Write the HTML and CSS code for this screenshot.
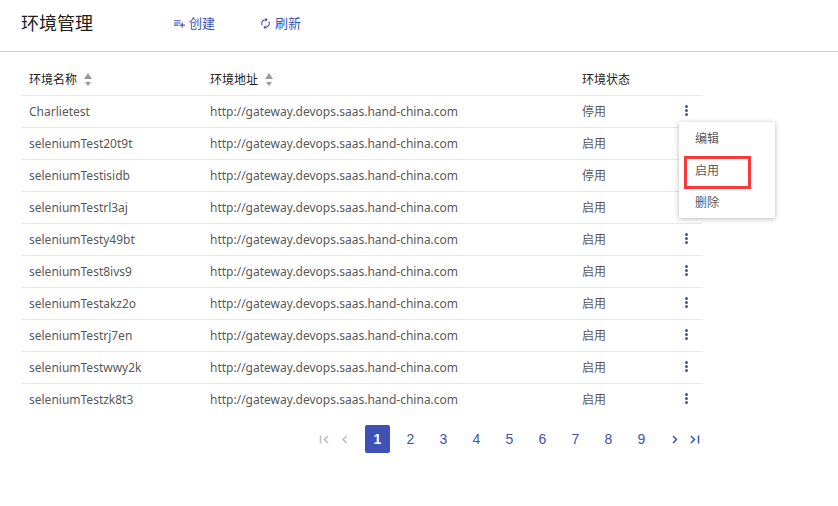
FILE: index.html
```html
<!DOCTYPE html>
<html lang="zh-CN">
<head>
<meta charset="utf-8">
<title>环境管理</title>
<link rel="stylesheet" href="styles.css">
</head>
<body>
<svg class="sprite" aria-hidden="true">
  <symbol id="more" viewBox="0 0 3 11"><circle cx="1.5" cy="1.500" r="1.500"/><circle cx="1.5" cy="5.500" r="1.500"/><circle cx="1.5" cy="9.500" r="1.500"/></symbol>
  <symbol id="sort" viewBox="0 0 8 13"><path d="M4 0l4 6H0z"/><path d="M4 13l3-4H1z"/></symbol>
</svg>
<header class="page-header">
  <h1 class="page-title">环境管理</h1>
  <button class="action" type="button">
    <svg class="action-icon" viewBox="0 0 24 24"><path d="M14 10H2v2h12v-2zm0-4H2v2h12V6zm4 8v-4h-2v4h-4v2h4v4h2v-4h4v-2h-4zM2 16h8v-2H2v2z"/></svg>
    创建
  </button>
  <button class="action" type="button">
    <svg class="action-icon" viewBox="0 0 24 24"><path d="M12 6v3l4-4-4-4v3c-4.400 0-8 3.600-8 8 0 1.600.5 3 1.200 4.300L6.700 14.800C6.300 14 6 13 6 12c0-3.300 2.700-6 6-6zm6.800 1.700L17.300 9.200c.4.900.7 1.800.7 2.800 0 3.300-2.700 6-6 6v-3l-4 4 4 4v-3c4.400 0 8-3.600 8-8 0-1.600-.5-3-1.200-4.300z"/></svg>
    刷新
  </button>
</header>
<main class="content">
  <table class="env-table">
    <colgroup><col class="col-name"><col class="col-url"><col class="col-status"><col class="col-actions"></colgroup>
    <thead>
      <tr>
        <th scope="col"><span class="sortable">环境名称<svg class="sort-icon"><use href="#sort"/></svg></span></th>
        <th scope="col"><span class="sortable">环境地址<svg class="sort-icon"><use href="#sort"/></svg></span></th>
        <th scope="col">环境状态</th>
        <td></td>
      </tr>
    </thead>
    <tbody>
      <tr><td>Charlietest</td><td>http://gateway.devops.saas.hand-china.com</td><td>停用</td>
        <td class="actions">
          <button class="more" type="button" aria-label="更多"><svg class="more-icon"><use href="#more"/></svg></button>
          <div class="menu">
            <button class="menu-item" type="button">编辑</button>
            <button class="menu-item marked" type="button">启用</button>
            <button class="menu-item" type="button">删除</button>
          </div>
        </td></tr>
      <tr><td>seleniumTest20t9t</td><td>http://gateway.devops.saas.hand-china.com</td><td>启用</td><td class="actions"><button class="more" type="button" aria-label="更多"><svg class="more-icon"><use href="#more"/></svg></button></td></tr>
      <tr><td>seleniumTestisidb</td><td>http://gateway.devops.saas.hand-china.com</td><td>停用</td><td class="actions"><button class="more" type="button" aria-label="更多"><svg class="more-icon"><use href="#more"/></svg></button></td></tr>
      <tr><td>seleniumTestrl3aj</td><td>http://gateway.devops.saas.hand-china.com</td><td>启用</td><td class="actions"><button class="more" type="button" aria-label="更多"><svg class="more-icon"><use href="#more"/></svg></button></td></tr>
      <tr><td>seleniumTesty49bt</td><td>http://gateway.devops.saas.hand-china.com</td><td>启用</td><td class="actions"><button class="more" type="button" aria-label="更多"><svg class="more-icon"><use href="#more"/></svg></button></td></tr>
      <tr><td>seleniumTest8ivs9</td><td>http://gateway.devops.saas.hand-china.com</td><td>启用</td><td class="actions"><button class="more" type="button" aria-label="更多"><svg class="more-icon"><use href="#more"/></svg></button></td></tr>
      <tr><td>seleniumTestakz2o</td><td>http://gateway.devops.saas.hand-china.com</td><td>启用</td><td class="actions"><button class="more" type="button" aria-label="更多"><svg class="more-icon"><use href="#more"/></svg></button></td></tr>
      <tr><td>seleniumTestrj7en</td><td>http://gateway.devops.saas.hand-china.com</td><td>启用</td><td class="actions"><button class="more" type="button" aria-label="更多"><svg class="more-icon"><use href="#more"/></svg></button></td></tr>
      <tr><td>seleniumTestwwy2k</td><td>http://gateway.devops.saas.hand-china.com</td><td>启用</td><td class="actions"><button class="more" type="button" aria-label="更多"><svg class="more-icon"><use href="#more"/></svg></button></td></tr>
      <tr><td>seleniumTestzk8t3</td><td>http://gateway.devops.saas.hand-china.com</td><td>启用</td><td class="actions"><button class="more" type="button" aria-label="更多"><svg class="more-icon"><use href="#more"/></svg></button></td></tr>
    </tbody>
  </table>
  <nav class="pagination" aria-label="分页">
    <button class="arrow" type="button" disabled aria-label="首页"><svg viewBox="0 0 13 13"><path d="M3.500 2.500v8M11 3L7.500 6.500 11 10"/></svg></button>
    <button class="arrow" type="button" disabled aria-label="上一页"><svg viewBox="0 0 13 13"><path d="M8.500 3L5 6.500 8.500 10"/></svg></button>
    <div class="pages">
      <button class="page current" type="button" aria-current="page">1</button>
      <button class="page" type="button">2</button>
      <button class="page" type="button">3</button>
      <button class="page" type="button">4</button>
      <button class="page" type="button">5</button>
      <button class="page" type="button">6</button>
      <button class="page" type="button">7</button>
      <button class="page" type="button">8</button>
      <button class="page" type="button">9</button>
    </div>
    <button class="arrow" type="button" aria-label="下一页"><svg viewBox="0 0 13 13"><path d="M5 3l3.500 3.500L5 10"/></svg></button>
    <button class="arrow" type="button" aria-label="末页"><svg viewBox="0 0 13 13"><path d="M2 3l3.500 3.500L2 10M9.500 2.500v8"/></svg></button>
  </nav>
</main>
</body>
</html>
```
FILE: styles.css
```css
*,
*::after { box-sizing: border-box; }

body {
  margin: 0;
  background: #fff;
  color: #595959;
  font: 12px/20px "Noto Sans", "Noto Sans CJK SC", sans-serif;
}

button {
  margin: 0;
  padding: 0;
  border: 0;
  background: none;
  color: #3f51b5;
  font: inherit;
  cursor: pointer;
}

.sprite { position: absolute; width: 0; height: 0; }

.page-header {
  display: flex;
  align-items: center;
  height: 52px;
  padding: 0 21px 5px;
  border-bottom: 1px solid #d3d3d3;
}

.page-title {
  margin: 0 80px 0 0;
  color: #212121;
  font-size: 18px;
  font-weight: 400;
  line-height: 24px;
}

.action {
  display: flex;
  align-items: center;
  gap: 3px;
  margin-right: 44px;
  font-size: 13px;
}

.action-icon { width: 13px; height: 13px; fill: currentColor; }

.content { padding: 12px 136px 24px 21px; }

.env-table {
  width: 100%;
  border-collapse: separate;
  border-spacing: 0;
  table-layout: fixed;
}

.col-name { width: 181px; }
.col-status { width: 97px; }
.col-actions { width: 31px; }

.env-table th,
.env-table td {
  height: 32px;
  padding: 0 8px;
  border-bottom: 1px solid #e8e8e8;
  text-align: left;
  font-weight: inherit;
}

.env-table th { color: #212121; }
.env-table tbody tr:last-child td { border-bottom-color: transparent; }

.sortable { display: flex; align-items: center; gap: 7px; }
.sort-icon { width: 8px; height: 13px; fill: #999; }

.env-table .actions { position: relative; padding: 0 0 2px; text-align: center; }

.more { display: block; width: 100%; height: 20px; line-height: 0; }
.more-icon { width: 3px; height: 11px; fill: #3f51b5; }

.menu {
  position: absolute;
  z-index: 1;
  top: 26px;
  left: 8px;
  width: 96px;
  background: #fff;
  box-shadow: 0 1px 5px rgba(0, 0, 0, 0.28);
}

.menu-item {
  display: block;
  position: relative;
  width: 100%;
  height: 32px;
  padding: 2px 16px 0;
  color: #595959;
  text-align: left;
}

.marked::after {
  content: "";
  position: absolute;
  top: 2px;
  left: 5px;
  width: 67px;
  height: 33px;
  border: 3px solid #f93a3a;
}

.pagination {
  display: flex;
  align-items: center;
  justify-content: flex-end;
  gap: 8px;
  margin-top: 9px;
}

.pages { display: flex; gap: 8px; padding: 0 6px; }

.page {
  width: 25px;
  height: 28px;
  border-radius: 2px;
  font-family: "Liberation Sans", Arial, sans-serif;
  font-size: 14px;
}

.current { background: #3f51b5; color: #fff; font-weight: 700; }

.arrow { display: flex; width: 13px; }
.arrow:disabled { color: #bdbdbd; cursor: default; }
.arrow svg { width: 13px; height: 13px; fill: none; stroke: currentColor; stroke-width: 1.5; }
```
